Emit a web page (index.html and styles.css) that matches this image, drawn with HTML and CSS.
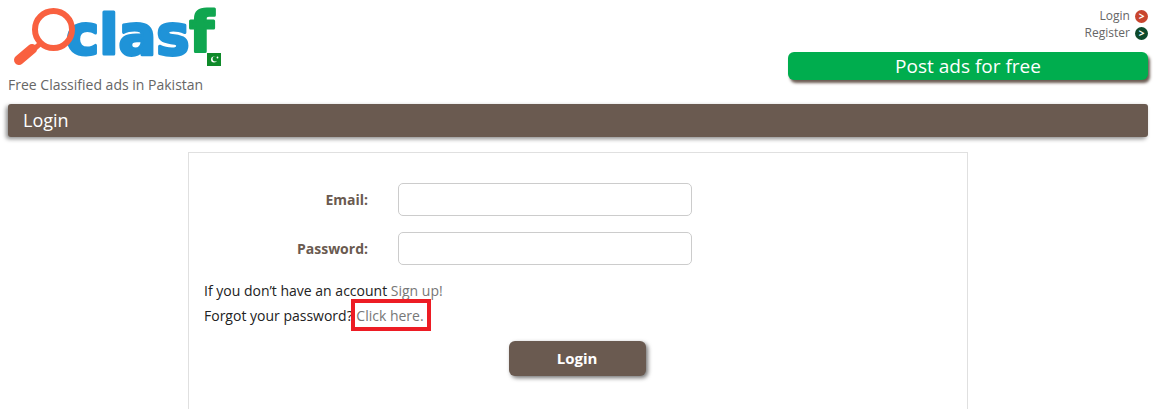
FILE: index.html
```html
<!DOCTYPE html>
<html lang="en">
<head>
  <meta charset="UTF-8" />
  <title>Login - Clasf</title>
  <link rel="stylesheet" href="styles.css">
</head>
<body>

<!-- Header -->
<div class="header">
  <div class="brand">
    <svg class="logo" width="224" height="70" viewBox="0 0 224 70">
      <text class="logo-text" x="66" y="54"><tspan class="logo-blue">clas</tspan><tspan class="logo-green" dy="-3">f</tspan></text>
      <circle cx="53.5" cy="29.5" r="18.5" fill="none" stroke="#f9603f" stroke-width="6"/>
      <path d="M41 43 L33 50" stroke="#f9603f" stroke-width="5"/>
      <path d="M32 49 L19 60" stroke="#f9603f" stroke-width="10" stroke-linecap="round"/>
      <rect x="207" y="53" width="14" height="13" fill="#0f8a2a"/>
      <circle cx="214" cy="59.5" r="3" fill="#fff"/>
      <circle cx="215.2" cy="58.8" r="2.6" fill="#0f8a2a"/>
      <circle cx="217.5" cy="57.5" r="0.9" fill="#fff"/>
    </svg>
    <div class="tagline">Free Classified ads in Pakistan</div>
  </div>
  <div class="header-right">
    <a class="top-link" href="#">Login <span class="arrow arrow-red">&gt;</span></a>
    <a class="top-link" href="#">Register <span class="arrow arrow-green">&gt;</span></a>
    <a class="post-btn" href="#">Post ads for free</a>
  </div>
</div>

<!-- Title bar -->
<div class="title-bar">Login</div>

<!-- Login form -->
<div class="card">
  <div class="form-row">
    <label class="form-label" for="email">Email:</label>
    <input class="form-input" type="text" id="email" />
  </div>
  <div class="form-row">
    <label class="form-label" for="password">Password:</label>
    <input class="form-input" type="password" id="password" />
  </div>
  <div class="notes">
    <p class="note">If you don’t have an account <a href="#">Sign up!</a></p>
    <p class="note">Forgot your password? <a class="marked" href="#">Click here.</a></p>
  </div>
  <div class="actions">
    <button class="login-btn">Login</button>
  </div>
</div>

</body>
</html>
```

FILE: styles.css
```css
html, body {
  height: 100%;
  overflow: hidden;
}
body {
  margin: 0;
  padding: 0 20px 0 8px;
  box-sizing: border-box;
  display: flex;
  flex-direction: column;
  background: #fff;
  font-family: 'Open Sans', sans-serif;
  font-size: 14px;
  color: #333;
}
a {
  color: #777;
  text-decoration: none;
}

/* Header */
.header {
  height: 104px;
  flex-shrink: 0;
  display: flex;
  justify-content: space-between;
}
.logo {
  display: block;
  margin-left: -8px;
}
.logo-text {
  font-family: 'DejaVu Sans', sans-serif;
  font-size: 56px;
  font-weight: 700;
  stroke-width: 3px;
  stroke-linejoin: round;
}
.logo-blue {
  fill: #1f93d8;
  stroke: #1f93d8;
}
.logo-green {
  fill: #10a650;
  stroke: #10a650;
}
.tagline {
  margin-top: 5px;
  color: #666;
  line-height: 19px;
}
.header-right {
  width: 360px;
  padding-top: 7px;
  display: flex;
  flex-direction: column;
  align-items: flex-end;
}
.top-link {
  font-size: 12px;
  line-height: 17px;
  color: #666;
}
.arrow {
  display: inline-block;
  width: 13px;
  height: 13px;
  margin-left: 2px;
  border-radius: 50%;
  color: #fff;
  font-size: 10px;
  font-weight: 700;
  line-height: 13px;
  text-align: center;
}
.arrow-red {
  background: #c8452e;
}
.arrow-green {
  background: #0d4a2c;
}
.post-btn {
  width: 360px;
  height: 28px;
  margin-top: 11px;
  background: #00ad4e;
  border-radius: 6px;
  box-shadow: 2px 3px 3px #6b5b52;
  color: #fff;
  font-size: 19px;
  line-height: 28px;
  text-align: center;
}

/* Title bar */
.title-bar {
  height: 33px;
  flex-shrink: 0;
  padding-left: 15px;
  background: #6a5a50;
  border-radius: 3px;
  box-shadow: -2px 2px 4px rgba(0, 0, 0, 0.45);
  color: #fff;
  font-size: 18px;
  line-height: 33px;
}

/* Login form */
.card {
  flex: 1;
  width: 780px;
  box-sizing: border-box;
  margin: 15px auto 0 180px;
  padding: 30px 15px 0;
  border: 1px solid #e0e0e0;
  border-bottom: none;
}
.form-row {
  display: flex;
  align-items: center;
}
.form-row + .form-row {
  margin-top: 16px;
}
.form-label {
  width: 164px;
  color: #6a5a50;
  font-weight: 700;
  text-align: right;
}
.form-input {
  width: 294px;
  height: 33px;
  box-sizing: border-box;
  margin-left: 30px;
  border: 1px solid #ccc;
  border-radius: 5px;
  background: #fff;
}
.notes {
  margin-top: 13px;
}
.note {
  margin: 0;
  color: #222;
  line-height: 25px;
}
.marked {
  position: relative;
}
.marked::after {
  content: '';
  position: absolute;
  left: -5px;
  right: -7px;
  top: -7px;
  bottom: -6px;
  border: 4px solid #ed1c24;
}
.actions {
  margin-top: 13px;
  padding-right: 2px;
  display: flex;
  justify-content: center;
}
.login-btn {
  width: 137px;
  height: 35px;
  padding-bottom: 3px;
  border: none;
  border-radius: 6px;
  background: #6a5a50;
  box-shadow: 2px 2px 4px rgba(0, 0, 0, 0.55);
  color: #fff;
  font-family: 'Open Sans', sans-serif;
  font-size: 15px;
  font-weight: 700;
}
```
